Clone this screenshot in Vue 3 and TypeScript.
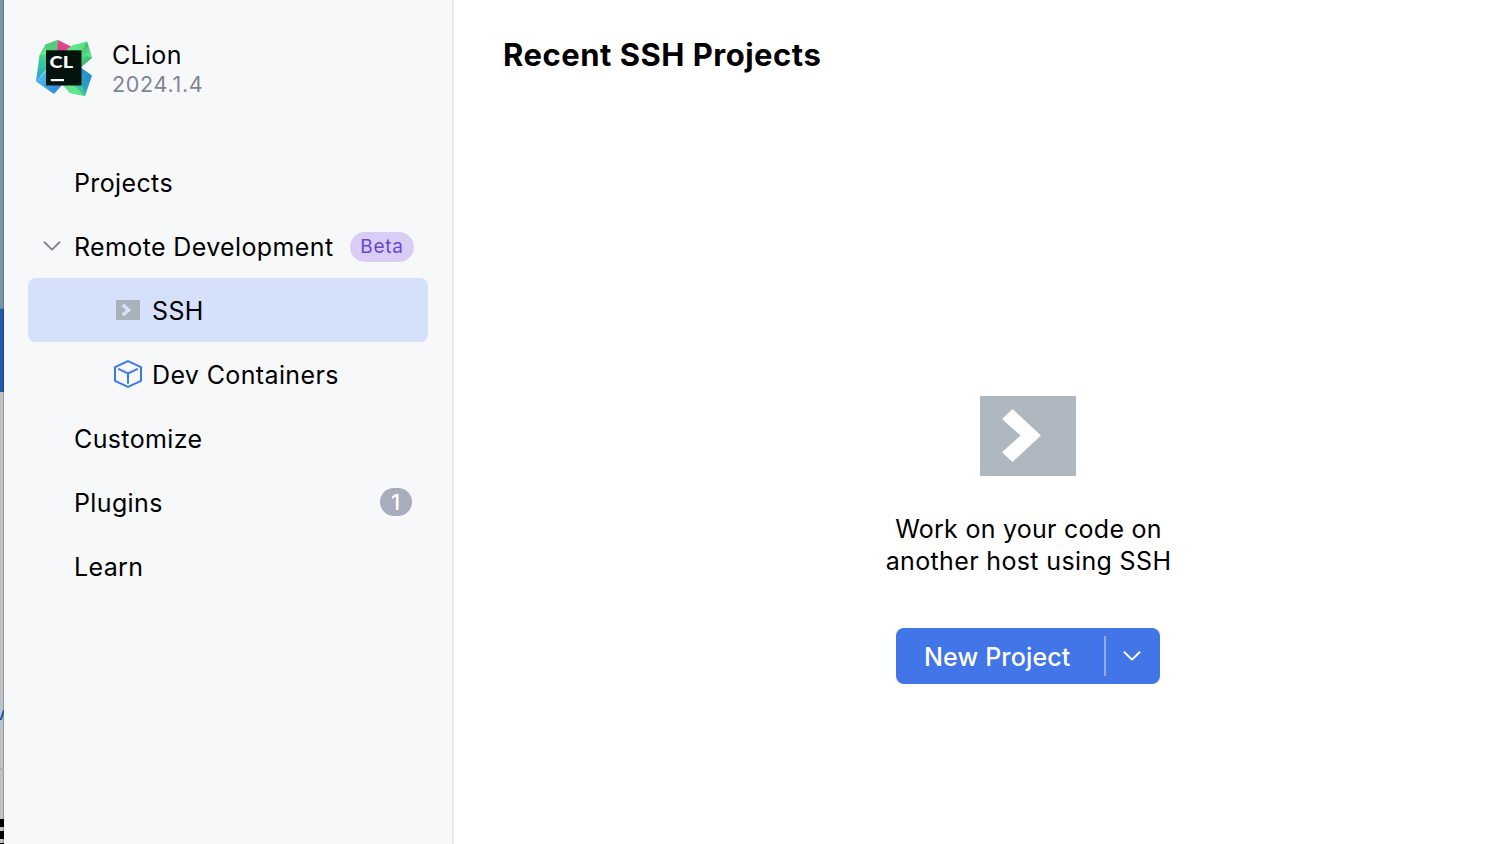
<script setup lang="ts">
import { ref } from 'vue'

interface NavItem {
  id: string
  label: string
  icon?: 'ssh' | 'container'
  expandable?: boolean
  tag?: string
  count?: number
}

const selected = ref('ssh')
const items: NavItem[] = [
  { id: 'projects', label: 'Projects' },
  { id: 'remote', label: 'Remote Development', expandable: true, tag: 'Beta' },
  { id: 'ssh', label: 'SSH', icon: 'ssh' },
  { id: 'containers', label: 'Dev Containers', icon: 'container' },
  { id: 'customize', label: 'Customize' },
  { id: 'plugins', label: 'Plugins', count: 1 },
  { id: 'learn', label: 'Learn' },
]
</script>

<template>
  <div class="window">
    <div class="backdrop" aria-hidden="true">
      <div class="strip teal"></div>
      <div class="strip blue"></div>
      <div class="strip grey">
        <svg width="4" height="452" viewBox="0 0 4 452">
          <rect x="3" width="1" height="452" fill="#989898" />
          <rect y="307" width="3" height="31" fill="#b8c5d2" />
          <path d="M0 327H1L4 318" fill="none" stroke="#2456a5" stroke-width="2" />
          <rect y="376" width="4" height="1.5" fill="#adadad" />
          <rect y="427" width="4" height="8" fill="#000" />
          <rect y="439" width="4" height="8" fill="#000" />
          <rect y="451" width="4" height="1" fill="#000" />
        </svg>
      </div>
    </div>

    <aside class="sidebar">
      <header class="brand">
        <svg class="logo" viewBox="0 0 56 56">
          <defs>
            <linearGradient id="leftFace" x1="0.6" y1="0" x2="0.2" y2="1">
              <stop offset="0.3" stop-color="#4fdc83" />
              <stop offset="0.7" stop-color="#35bfa8" />
              <stop offset="1" stop-color="#2b9fdc" />
            </linearGradient>
            <linearGradient id="rightFace" x1="0" y1="0" x2="1" y2="1">
              <stop offset="0" stop-color="#6df27d" />
              <stop offset="0.6" stop-color="#4fdb86" />
              <stop offset="1" stop-color="#2b8f70" />
            </linearGradient>
            <linearGradient id="tipFace" x1="0" y1="0" x2="0.3" y2="1">
              <stop offset="0" stop-color="#3d9c70" />
              <stop offset="1" stop-color="#5be885" />
            </linearGradient>
            <linearGradient id="lowerFace" x1="1" y1="0" x2="0.1" y2="0.9">
              <stop offset="0" stop-color="#2480d4" />
              <stop offset="0.55" stop-color="#2fa5c0" />
              <stop offset="1" stop-color="#5de687" />
            </linearGradient>
            <linearGradient id="cornerFace" x1="0" y1="0" x2="1" y2="1">
              <stop offset="0" stop-color="#55c8ea" />
              <stop offset="1" stop-color="#2b80d8" />
            </linearGradient>
          </defs>
          <path d="M9.5 4.5L22 0L26 12L12 28L0 41.5L3.5 15Z" fill="url(#leftFace)" />
          <path d="M9.5 4.5L22 0V12H10Z" fill="#56cc7c" />
          <path d="M3.5 15L10 9V14Z" fill="#6cec88" />
          <path d="M22 0L36 7L26 14H21Z" fill="#dc4588" />
          <path d="M29 11L36 5.5L51 1.5L56 18L44 28Z" fill="url(#rightFace)" />
          <path d="M51 1.5L56 18L45 13Z" fill="url(#tipFace)" />
          <path d="M0 41.5L11 30L26 45L18 54Z" fill="url(#cornerFace)" />
          <path d="M26 44L44 27L56 35.5L49 56L34 53Z" fill="url(#lowerFace)" />
          <path d="M26 44H37L49 56L34 53Z" fill="#5fe58a" />
          <path d="M37 44H45L49 56Z" fill="#3ec79b" />
          <rect x="10" y="10.3" width="35.5" height="35.2" fill="#03130d" />
          <text x="13.6" y="27.8" class="logo-text" textLength="23.4" lengthAdjust="spacingAndGlyphs">CL</text>
          <rect x="14.8" y="39" width="13.2" height="2.2" fill="#fff" />
        </svg>
        <div class="product">
          <div class="name">CLion</div>
          <div class="version">2024.1.4</div>
        </div>
      </header>

      <nav class="nav">
        <div
          v-for="item in items"
          :key="item.id"
          class="row"
          :class="{ selected: selected === item.id, child: item.icon }"
          @click="selected = item.id"
        >
          <span v-if="!item.icon" class="gutter">
            <svg v-if="item.expandable" width="18" height="12" viewBox="0 0 18 12">
              <path d="M1.5 2.3L9 9.6L16.5 2.3" fill="none" stroke="#818594" stroke-width="1.9" stroke-linecap="round" stroke-linejoin="round" />
            </svg>
          </span>
          <svg v-if="item.icon === 'ssh'" class="icon" viewBox="0 0 32 32">
            <rect x="4" y="5" width="24" height="20" fill="#a7b2ba" />
            <path d="M10.6 9.7L16.7 15L10.6 20.3" fill="none" stroke="#d6e1fc" stroke-width="3.4" />
          </svg>
          <svg v-else-if="item.icon === 'container'" class="icon" viewBox="0 0 32 32" fill="none" stroke="#3d78ec" stroke-width="2">
            <path d="M16 2.1L29 8.2V21.8L16 27.9L3 21.8V8.2Z" />
            <path d="M6.8 10.2L16 14.4L25.2 10.2M16 14.4V24" stroke-linecap="round" />
          </svg>
          <span class="label">{{ item.label }}</span>
          <span v-if="item.tag" class="tag">{{ item.tag }}</span>
          <span v-if="item.count" class="count">{{ item.count }}</span>
        </div>
      </nav>
    </aside>

    <main class="content">
      <h1>Recent SSH Projects</h1>
      <section class="empty">
        <svg width="96" height="80" viewBox="0 0 96 80">
          <rect width="96" height="80" fill="#afb8c0" />
          <path d="M22 23L32.5 13L61 39.5L32.5 66L22 56.3L40.5 39.5Z" fill="#fff" />
        </svg>
        <p><span class="line first">Work on your code on</span><span class="line">another host using SSH</span></p>
        <div class="split-button">
          <button class="primary"><span>New Project</span></button>
          <i class="divider"></i>
          <button class="more" aria-label="More options">
            <svg width="18" height="12" viewBox="0 0 18 12">
              <path d="M1.5 2.3L9 9.6L16.5 2.3" fill="none" stroke="#fff" stroke-width="2" stroke-linecap="round" stroke-linejoin="round" />
            </svg>
          </button>
        </div>
      </section>
    </main>
  </div>
</template>

<style>
body {
  margin: 0;
  overflow: hidden;
}
</style>

<style scoped>
.window {
  display: flex;
  width: 1494px;
  height: 844px;
  background: #fff;
  color: #000;
  font: 400 25px/32px Inter, "Liberation Sans", sans-serif;
}
.backdrop {
  width: 4px;
  flex: none;
  display: flex;
  flex-direction: column;
}
.strip {
  box-sizing: border-box;
  width: 4px;
  overflow: hidden;
  border-right: 1px solid transparent;
}
.teal { height: 309px; background: #7898a7; border-bottom: 2px solid #6484ad; border-right-color: #5f7884; }
.blue { height: 83px; background: #2458ac; border-right-color: #1d4687; }
.grey { height: 452px; background: #c1c1c1; border-right: 0; }
.strip svg { display: block; }
.sidebar {
  box-sizing: border-box;
  width: 450px;
  flex: none;
  background: #f7f8fa;
  border-right: 2px solid #ebecf0;
}
.brand {
  display: flex;
  height: 150px;
  box-sizing: border-box;
  padding: 39px 0 0 32px;
}
.logo { width: 56px; height: 56px; margin-top: 1px; flex: none; }
.logo-text { font: 900 17px Lato, Inter, sans-serif; fill: #fff; }
.product { margin-left: 20px; }
.name { letter-spacing: 0.3px; }
.version {
  color: #818594;
  font-size: 21.5px;
  line-height: 26px;
  letter-spacing: 0.7px;
}
.nav { padding: 0 24px; }
.row {
  display: flex;
  align-items: center;
  height: 64px;
  box-sizing: border-box;
  padding: 2px 16px 0 14px;
  border-radius: 8px;
  white-space: nowrap;
}
.row.selected { background: #d5e1fb; }
.child { padding-left: 84px; }
.gutter { width: 32px; flex: none; display: flex; padding-left: 1px; box-sizing: border-box; }
.gutter svg { margin-top: -2px; }
.icon { width: 32px; height: 32px; margin-right: 8px; flex: none; }
.label { letter-spacing: 0.37px; }
.tag {
  flex: none;
  margin-left: auto;
  margin-right: -2px;
  width: 64px;
  height: 30px;
  border-radius: 15px;
  background: #d9ccf5;
  color: #6b47cc;
  font-size: 19px;
  line-height: 30px;
  text-align: center;
  letter-spacing: 0.7px;
}
.count {
  margin-left: auto;
  width: 32px;
  height: 28px;
  margin-top: -2px;
  border-radius: 14px;
  background: #a8adbd;
  color: #fff;
  font-size: 22px;
  font-weight: 500;
  line-height: 29px;
  text-align: center;
  text-indent: -1px;
}
.content {
  flex: 1;
  display: flex;
  flex-direction: column;
}
h1 {
  margin: 35px 0 0 49px;
  font-size: 31px;
  line-height: 40px;
  font-weight: 700;
  letter-spacing: 0.5px;
}
.empty {
  display: flex;
  flex-direction: column;
  align-items: center;
  width: 264px;
  margin: 321px 0 0 442px;
}
p { margin: 37px 0 51px 1px; text-align: center; letter-spacing: 0.36px; white-space: nowrap; }
.first { letter-spacing: 0.26px; }
.line { display: block; }
.split-button {
  display: flex;
  align-items: center;
  width: 264px;
  height: 56px;
  border-radius: 8px;
  background: #4175e8;
}
button {
  padding: 0;
  border: 0;
  background: none;
  color: #fff;
  font: inherit;
  height: 56px;
}
.primary { width: 208px; padding: 2px 0 0 28px; text-align: left; font-weight: 500; letter-spacing: 0.15px; }
.divider { width: 2px; height: 40px; background: #8eadf2; }
.more { width: 52px; display: flex; align-items: center; justify-content: center; }
</style>
